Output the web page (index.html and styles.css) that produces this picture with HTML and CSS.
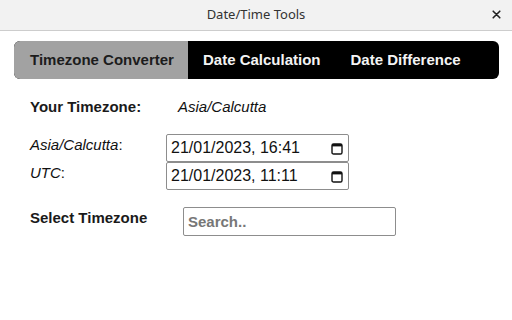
FILE: index.html
```html
<!DOCTYPE html>
<html lang="en">
<head>
<meta charset="utf-8">
<title>Date/Time Tools</title>
<link rel="stylesheet" href="styles.css">
</head>
<body>
<header class="titlebar">
  <span class="spacer"></span>
  <h1 class="title">Date/Time Tools</h1>
  <button class="close" aria-label="Close">
    <svg width="9" height="9" viewBox="0 0 9 9"><path d="M1.2 1.2L7.8 7.8M7.8 1.2L1.2 7.8" stroke="#222" stroke-width="1.6" stroke-linecap="round"/></svg>
  </button>
</header>
<main class="content">
  <nav class="tabs">
    <div class="tab active">Timezone Converter</div>
    <div class="tab">Date Calculation</div>
    <div class="tab">Date Difference</div>
  </nav>
  <div class="row-tz">
    <span class="label">Your Timezone:</span>
    <span class="tz-value">Asia/Calcutta</span>
  </div>
  <div class="convert">
    <span class="zone"><i>Asia/Calcutta</i>:</span>
    <div class="field">
      <input class="field-input" type="text" value="21/01/2023, 16:41">
      <svg class="cal" width="12" height="13" viewBox="0 0 12 13"><rect x="1" y="2" width="10" height="10" rx="1.6" fill="none" stroke="#111" stroke-width="1.4"/><rect x="1" y="2" width="10" height="2.4" fill="#111"/></svg>
    </div>
    <span class="zone"><i>UTC</i>:</span>
    <div class="field">
      <input class="field-input" type="text" value="21/01/2023, 11:11">
      <svg class="cal" width="12" height="13" viewBox="0 0 12 13"><rect x="1" y="2" width="10" height="10" rx="1.6" fill="none" stroke="#111" stroke-width="1.4"/><rect x="1" y="2" width="10" height="2.4" fill="#111"/></svg>
    </div>
  </div>
  <div class="row-select">
    <span class="label select-label">Select Timezone</span>
    <input class="search" type="text" placeholder="Search..">
  </div>
</main>
</body>
</html>
```
FILE: styles.css
```css
* { box-sizing: border-box; }
html, body { margin: 0; padding: 0; background: #fff; }
body { font-family: "Liberation Sans", Arial, sans-serif; color: #111; width: 512px; height: 320px; overflow: hidden; }

.titlebar {
  height: 31px;
  background: #f2f2f2;
  border-bottom: 1px solid #cdcdcd;
  display: grid;
  grid-template-columns: 1fr auto 1fr;
  align-items: center;
}
.title {
  margin: 0;
  font-family: "Noto Sans", sans-serif;
  font-weight: normal;
  font-size: 13px;
  color: #333;
  padding-bottom: 2px;
}
.close {
  justify-self: end;
  margin-right: 11px;
  border: 0;
  background: none;
  padding: 0;
  width: 9px;
  height: 9px;
  display: flex;
  margin-bottom: 2px;
}

.content { padding: 10px 13px 0 14px; }

.tabs {
  display: flex;
  height: 38px;
  background: #000;
  border-radius: 6px;
  overflow: hidden;
}
.tab {
  display: flex;
  align-items: center;
  white-space: nowrap;
  padding: 0 15px 1px 15px;
  font-size: 15px;
  font-weight: bold;
  color: #f4f4f4;
}
.tab.active {
  background: #a2a2a2;
  color: #1c1c1c;
  padding: 0 0 1px 16px;
  flex: 0 0 174px;
}

.label { font-weight: bold; font-size: 15px; color: #1a1a1a; }

.row-tz {
  display: flex;
  margin-top: 18px;
  padding-left: 16px;
  line-height: 20px;
  font-size: 15px;
}
.row-tz .label { width: 148px; }
.tz-value { font-style: italic; }

.convert {
  display: grid;
  grid-template-columns: 136px 183px;
  grid-auto-rows: 28px;
  margin-top: 17px;
  padding-left: 16px;
}
.zone { font-size: 15px; line-height: 22px; color: #111; }
.field {
  display: flex;
  align-items: center;
  border: 1px solid #8d8d8d;
  border-radius: 2px;
  padding: 0 5px 0 4px;
  background: #fff;
}
.field-input {
  flex: 1;
  min-width: 0;
  border: 0;
  padding: 0;
  font-family: "Liberation Sans", Arial, sans-serif;
  font-size: 16px;
  color: #111;
  background: transparent;
  outline: none;
}
.cal { flex: none; }

.row-select {
  display: flex;
  align-items: flex-start;
  margin-top: 17px;
  padding-left: 16px;
}
.select-label { width: 153px; line-height: 22px; }
.search {
  width: 213px;
  height: 29px;
  border: 1px solid #8d8d8d;
  border-radius: 2px;
  padding: 0 4px;
  font-family: "Liberation Sans", Arial, sans-serif;
  font-size: 15px;
  font-weight: bold;
}
.search::placeholder { color: #777; }
```
